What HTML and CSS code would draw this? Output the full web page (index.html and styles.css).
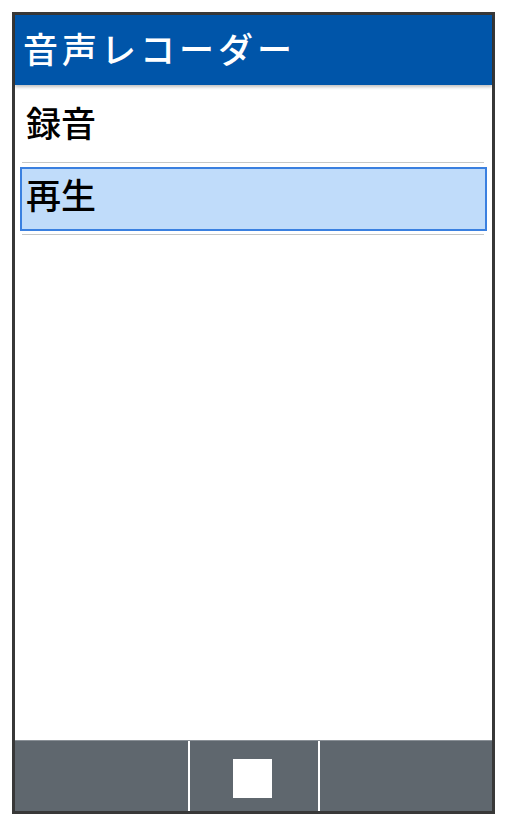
FILE: index.html
```html
<!DOCTYPE html>
<html lang="ja">

<head>
    <meta charset="UTF-8">
    <meta name="viewport" content="width=device-width, initial-scale=1.0">
    <title>音声レコーダー</title>
    <link rel="stylesheet" href="styles.css">
</head>

<body>
    <div class="phone">
        <!-- Cabecera -->
        <div class="header">音声レコーダー</div>

        <!-- Menu -->
        <div class="list">
            <div class="row">
                <div class="item">録音</div>
            </div>
            <div class="row">
                <div class="item selected">再生</div>
            </div>
        </div>

        <!-- Teclas inferiores -->
        <div class="softkeys">
            <div class="key"></div>
            <div class="key key-center"><span class="stop"></span></div>
            <div class="key"></div>
        </div>
    </div>
</body>

</html>
```

FILE: styles.css
```css
body {
    font-family: "Noto Sans CJK JP", "Noto Sans", sans-serif;
    background-color: #fff;
    margin: 0;
    padding: 0;
}

.phone {
    margin: 12px;
    width: 477px;
    height: 796px;
    border: 3px solid #383838;
    display: flex;
    flex-direction: column;
    background-color: #fff;
}

.header {
    height: 70px;
    background-color: #0055a9;
    color: #fff;
    font-size: 35px;
    font-weight: 500;
    letter-spacing: 4px;
    line-height: 66px;
    padding-left: 8px;
    box-sizing: border-box;
    padding-bottom: 4px;
    box-shadow: 0 2px 3px rgba(0, 0, 0, 0.25);
    position: relative;
}

.list {
    flex: 1;
    padding-top: 6px;
}

.row {
    margin: 0 8px 0 7px;
    border-bottom: 1px solid #c6c8c8;
    height: 71px;
    display: flex;
    flex-direction: column;
    justify-content: center;
}

.item {
    font-size: 35px;
    font-weight: 500;
    color: #000;
    padding-left: 4px;
    line-height: 50px;
    padding-bottom: 10px;
}

/* Fila seleccionada */
.selected {
    margin: 0 -3px 0 -2px;
    height: 50px;
    padding-left: 4px;
    border: 2px solid #3a80e0;
    background-color: #c0dcfa;
}

.softkeys {
    height: 70px;
    background-color: #5f676e;
    border-top: 1px solid #8a9096;
    display: flex;
}

.key {
    flex: 1;
    display: flex;
    align-items: center;
    justify-content: center;
}

.key:first-child {
    flex: 0 0 173px;
}

.key-center {
    flex: 0 0 128px;
    border-left: 2px solid #fff;
    border-right: 2px solid #fff;
}

.stop {
    width: 39px;
    height: 39px;
    background-color: #fff;
    margin-top: 4px;
    margin-right: 4px;
}
```
